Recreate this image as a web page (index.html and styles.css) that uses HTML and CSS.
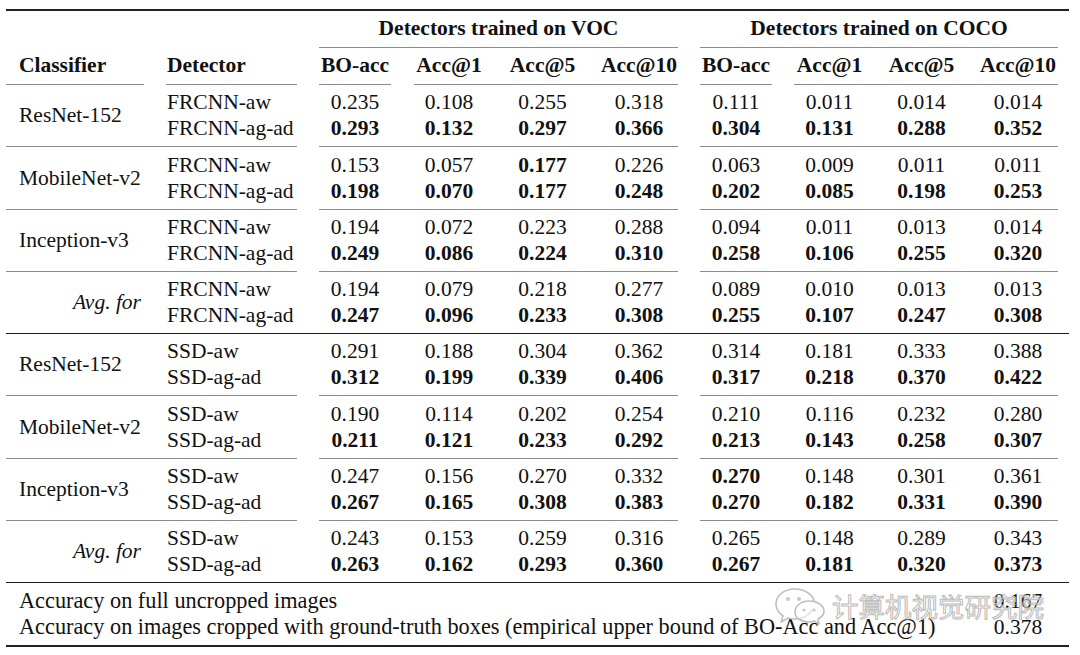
FILE: index.html
```html
<!DOCTYPE html>
<html>
<head>
<meta charset="utf-8">
<link rel="stylesheet" href="styles.css">
</head>
<body>
<div class="table">
  <div class="rule-top"></div>

  <div class="grid head1">
    <div class="h span-voc">Detectors trained on VOC</div>
    <div class="h span-coco">Detectors trained on COCO</div>
    <div class="line l-voc"></div>
    <div class="line l-coco"></div>
  </div>

  <div class="grid head2">
    <div class="h left c1">Classifier</div>
    <div class="h left c2">Detector</div>
    <div class="h">BO-acc</div>
    <div class="h">Acc@1</div>
    <div class="h">Acc@5</div>
    <div class="h">Acc@10</div>
    <div class="h">BO-acc</div>
    <div class="h">Acc@1</div>
    <div class="h">Acc@5</div>
    <div class="h">Acc@10</div>
    <div class="line l-c1"></div>
    <div class="line l-c2"></div>
    <div class="line l-c3"></div>
    <div class="line l-c46"></div>
    <div class="line l-c7"></div>
    <div class="line l-c810"></div>
  </div>

  <div class="grid group">
    <div class="cls">ResNet-152</div>
    <div class="det">FRCNN-aw</div>
    <div>0.235</div><div>0.108</div><div>0.255</div><div>0.318</div>
    <div>0.111</div><div>0.011</div><div>0.014</div><div>0.014</div>
    <div class="det">FRCNN-ag-ad</div>
    <div class="b">0.293</div><div class="b">0.132</div><div class="b">0.297</div><div class="b">0.366</div>
    <div class="b">0.304</div><div class="b">0.131</div><div class="b">0.288</div><div class="b">0.352</div>
    <div class="line l-left"></div><div class="line l-voc"></div><div class="line l-coco"></div>
  </div>

  <div class="grid group">
    <div class="cls">MobileNet-v2</div>
    <div class="det">FRCNN-aw</div>
    <div>0.153</div><div>0.057</div><div class="b">0.177</div><div>0.226</div>
    <div>0.063</div><div>0.009</div><div>0.011</div><div>0.011</div>
    <div class="det">FRCNN-ag-ad</div>
    <div class="b">0.198</div><div class="b">0.070</div><div class="b">0.177</div><div class="b">0.248</div>
    <div class="b">0.202</div><div class="b">0.085</div><div class="b">0.198</div><div class="b">0.253</div>
    <div class="line l-left"></div><div class="line l-voc"></div><div class="line l-coco"></div>
  </div>

  <div class="grid group">
    <div class="cls">Inception-v3</div>
    <div class="det">FRCNN-aw</div>
    <div>0.194</div><div>0.072</div><div>0.223</div><div>0.288</div>
    <div>0.094</div><div>0.011</div><div>0.013</div><div>0.014</div>
    <div class="det">FRCNN-ag-ad</div>
    <div class="b">0.249</div><div class="b">0.086</div><div class="b">0.224</div><div class="b">0.310</div>
    <div class="b">0.258</div><div class="b">0.106</div><div class="b">0.255</div><div class="b">0.320</div>
    <div class="line l-left"></div><div class="line l-voc"></div><div class="line l-coco"></div>
  </div>

  <div class="grid group">
    <div class="cls avg">Avg. for</div>
    <div class="det">FRCNN-aw</div>
    <div>0.194</div><div>0.079</div><div>0.218</div><div>0.277</div>
    <div>0.089</div><div>0.010</div><div>0.013</div><div>0.013</div>
    <div class="det">FRCNN-ag-ad</div>
    <div class="b">0.247</div><div class="b">0.096</div><div class="b">0.233</div><div class="b">0.308</div>
    <div class="b">0.255</div><div class="b">0.107</div><div class="b">0.247</div><div class="b">0.308</div>
    <div class="line l-full"></div>
  </div>

  <div class="grid group">
    <div class="cls">ResNet-152</div>
    <div class="det">SSD-aw</div>
    <div>0.291</div><div>0.188</div><div>0.304</div><div>0.362</div>
    <div>0.314</div><div>0.181</div><div>0.333</div><div>0.388</div>
    <div class="det">SSD-ag-ad</div>
    <div class="b">0.312</div><div class="b">0.199</div><div class="b">0.339</div><div class="b">0.406</div>
    <div class="b">0.317</div><div class="b">0.218</div><div class="b">0.370</div><div class="b">0.422</div>
    <div class="line l-left"></div><div class="line l-voc"></div><div class="line l-coco"></div>
  </div>

  <div class="grid group">
    <div class="cls">MobileNet-v2</div>
    <div class="det">SSD-aw</div>
    <div>0.190</div><div>0.114</div><div>0.202</div><div>0.254</div>
    <div>0.210</div><div>0.116</div><div>0.232</div><div>0.280</div>
    <div class="det">SSD-ag-ad</div>
    <div class="b">0.211</div><div class="b">0.121</div><div class="b">0.233</div><div class="b">0.292</div>
    <div class="b">0.213</div><div class="b">0.143</div><div class="b">0.258</div><div class="b">0.307</div>
    <div class="line l-left"></div><div class="line l-voc"></div><div class="line l-coco"></div>
  </div>

  <div class="grid group">
    <div class="cls">Inception-v3</div>
    <div class="det">SSD-aw</div>
    <div>0.247</div><div>0.156</div><div>0.270</div><div>0.332</div>
    <div class="b">0.270</div><div>0.148</div><div>0.301</div><div>0.361</div>
    <div class="det">SSD-ag-ad</div>
    <div class="b">0.267</div><div class="b">0.165</div><div class="b">0.308</div><div class="b">0.383</div>
    <div class="b">0.270</div><div class="b">0.182</div><div class="b">0.331</div><div class="b">0.390</div>
    <div class="line l-left"></div><div class="line l-voc"></div><div class="line l-coco"></div>
  </div>

  <div class="grid group">
    <div class="cls avg">Avg. for</div>
    <div class="det">SSD-aw</div>
    <div>0.243</div><div>0.153</div><div>0.259</div><div>0.316</div>
    <div>0.265</div><div>0.148</div><div>0.289</div><div>0.343</div>
    <div class="det">SSD-ag-ad</div>
    <div class="b">0.263</div><div class="b">0.162</div><div class="b">0.293</div><div class="b">0.360</div>
    <div class="b">0.267</div><div class="b">0.181</div><div class="b">0.320</div><div class="b">0.373</div>
    <div class="line l-full"></div>
  </div>

  <div class="grid foot">
    <div class="flabel">Accuracy on full uncropped images</div>
    <div class="fval">0.167</div>
    <div class="flabel">Accuracy on images cropped with ground-truth boxes (empirical upper bound of BO-Acc and Acc@1)</div>
    <div class="fval">0.378</div>
  </div>

  <div class="rule-bottom"></div>

  <div class="watermark">
    <svg class="wm-icon" width="56" height="40" viewBox="0 0 54 40">
      <path d="M22 3 C10 3 3 10 3 18 C3 23 6 27 10 30 L8 36 L15 32 C17 33 20 33 22 33" fill="rgba(255,255,255,0.5)" stroke="#b8b8b8" stroke-width="1.6" stroke-linejoin="round"/>
      <path d="M22 33 C 30 33 36 29 39 24" fill="none" stroke="#b8b8b8" stroke-width="1.6"/>
      <path d="M22 3 C32 3 40 9 41 15" fill="none" stroke="#b8b8b8" stroke-width="1.6"/>
      <circle cx="15" cy="13" r="2" fill="#c4c4c4"/>
      <circle cx="26" cy="13" r="2" fill="#c4c4c4"/>
      <path d="M36 15 C28 15 22 20 22 26 C22 32 28 36 36 36 C38 36 40 36 41 35 L46 38 L45 33 C49 31 51 28 51 25 C51 20 45 15 36 15 Z" fill="rgba(255,255,255,0.6)" stroke="#b8b8b8" stroke-width="1.6" stroke-linejoin="round"/>
      <circle cx="31" cy="24" r="1.6" fill="#c4c4c4"/>
      <circle cx="41" cy="24" r="1.6" fill="#c4c4c4"/>
    </svg>
    <span class="wm-text">计算机视觉研究院</span>
  </div>
</div>
</body>
</html>
```
FILE: styles.css
```css
html, body {
  margin: 0;
  padding: 0;
  background: #ffffff;
}

body {
  font-family: "Liberation Serif", "Times New Roman", serif;
  font-size: 21.5px;
  color: #111111;
}

.table {
  position: relative;
  margin-left: 6px;
  width: 1063px;
  padding-top: 9px;
}

.rule-top {
  height: 2px;
  background: #222222;
}

.rule-bottom {
  height: 2px;
  background: #222222;
}

.grid {
  display: grid;
  grid-template-columns: 149px 153px 94px 94px 93px 100px 94px 93px 91px 102px;
  line-height: 26px;
}

.grid > div {
  text-align: center;
  white-space: nowrap;
}

.h {
  font-weight: bold;
}

.head1 {
  padding-top: 4px;
  grid-template-rows: 26px auto;
}

.span-voc {
  grid-column: 3 / 7;
}

.span-coco {
  grid-column: 7 / 11;
}

.head2 {
  padding-top: 4px;
  grid-template-rows: 26px auto;
}

.grid > .left {
  text-align: left;
}

.grid > .c1 {
  padding-left: 13px;
}

.grid > .c2 {
  padding-left: 12px;
}

.line {
  height: 1px;
  background: #8c8c8c;
  grid-row: 2;
}

.head1 .line {
  margin-top: 6px;
}

.head2 .line {
  margin-top: 6px;
}

.group .line {
  grid-row: 3;
  margin-top: 5px;
}

.l-voc { grid-column: 3 / 7; margin-left: 11px; margin-right: 11px; }
.l-coco { grid-column: 7 / 11; margin-left: 11px; margin-right: 11px; }
.l-c1 { grid-column: 1 / 2; margin-right: 11px; }
.l-c2 { grid-column: 2 / 3; margin-left: 11px; margin-right: 11px; }
.l-c3 { grid-column: 3 / 4; margin-left: 11px; margin-right: 11px; }
.l-c46 { grid-column: 4 / 7; margin-left: 12px; margin-right: 11px; }
.l-c7 { grid-column: 7 / 8; margin-left: 11px; margin-right: 11px; }
.l-c810 { grid-column: 8 / 11; margin-left: 11px; margin-right: 11px; }
.l-left { grid-column: 1 / 3; margin-right: 11px; }

.group .l-full {
  grid-column: 1 / 11;
  background: #1a1a1a;
}

.group {
  padding-top: 4.3px;
  grid-template-rows: 26px 26px auto;
}

.grid > .cls {
  grid-column: 1;
  grid-row: 1 / 3;
  align-self: center;
  text-align: left;
  padding-left: 13px;
}

.grid > .avg {
  font-style: italic;
  text-align: right;
  padding-left: 0;
  padding-right: 14px;
}

.grid > .det {
  grid-column: 2;
  text-align: left;
  padding-left: 12px;
}

.b {
  font-weight: bold;
}

.foot {
  padding-top: 5px;
  padding-bottom: 5px;
}

.grid > .flabel {
  grid-column: 1 / 10;
  text-align: left;
  padding-left: 13px;
  font-size: 22.3px;
}

.grid > .fval {
  grid-column: 10;
}

.watermark {
  position: absolute;
  left: 766px;
  top: 586px;
  display: flex;
  align-items: center;
  gap: 4px;
  opacity: 0.9;
}

.wm-icon {
  display: block;
}

.wm-text {
  font-family: "Noto Sans CJK SC", sans-serif;
  font-size: 26.5px;
  line-height: 36px;
  color: rgba(255, 255, 255, 0.55);
  -webkit-text-stroke: 1px #b4b4b4;
}
```
